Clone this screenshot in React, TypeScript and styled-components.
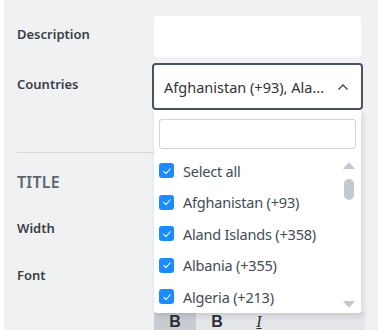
import React from "react";
import styled, { createGlobalStyle } from "styled-components";

const GlobalStyle = createGlobalStyle`
  html, body {
    margin: 0;
    padding: 0;
    background: #ffffff;
  }
  body {
    font-family: "Noto Sans", "Open Sans", Arial, sans-serif;
  }
`;

const Page = styled.div`
  display: flex;
  height: 330px;
  overflow: hidden;
`;

const Panel = styled.div`
  position: relative;
  margin-left: 4px;
  width: 374px;
  height: 330px;
  background-color: #f0f1f3;
  padding: 16px 17px 0 13px;
  box-sizing: border-box;
`;

const Row = styled.div<{ $h: number }>`
  display: grid;
  grid-template-columns: 137px 207px;
  align-items: center;
  height: ${(p) => p.$h}px;
`;

const Label = styled.div`
  font-size: 13px;
  font-weight: 600;
  color: #3a3f47;
  padding-bottom: 5px;
`;

const TextBox = styled.div`
  height: 41px;
  background: #ffffff;
  border-radius: 3px;
`;

const Select = styled.div`
  position: relative;
  margin-left: -2px;
  width: 211px;
  height: 47px;
  box-sizing: border-box;
  border: 2px solid #4a5360;
  border-radius: 4px;
  background: #ffffff;
  display: flex;
  align-items: center;
  justify-content: space-between;
  padding: 0 12px 0 10px;
  font-size: 14.5px;
  color: #333333;
`;

const Divider = styled.div`
  margin-top: 42px;
  width: 344px;
  height: 1px;
  background: #d6d9dd;
`;

const SectionTitle = styled.div`
  margin-top: 18px;
  height: 20px;
  font-size: 16px;
  font-weight: 600;
  color: #5c6570;
  letter-spacing: 0.2px;
`;

const Dropdown = styled.div`
  position: absolute;
  left: 150px;
  top: 110px;
  width: 207px;
  height: 203px;
  background: #ffffff;
  border-radius: 0 0 3px 3px;
  box-shadow: 2px 3px 6px rgba(0, 0, 0, 0.12);
  padding: 9px 5px 0 5px;
  box-sizing: border-box;
  z-index: 2;
`;

const Search = styled.div`
  height: 30px;
  box-sizing: border-box;
  border: 1px solid #cfd2d6;
  border-radius: 3px;
`;

const ListWrap = styled.div`
  display: flex;
  margin-top: 6px;
`;

const List = styled.div`
  flex: 1;
  display: flex;
  flex-direction: column;
`;

const Item = styled.div`
  display: flex;
  align-items: center;
  gap: 9px;
  height: 31.5px;
  font-size: 14.5px;
  letter-spacing: -0.2px;
  color: #444a52;
`;

const Check = styled.span`
  width: 15px;
  height: 15px;
  border-radius: 3px;
  background: #1a8cff;
  display: flex;
  align-items: center;
  justify-content: center;
`;

const Scroll = styled.div`
  width: 14px;
  display: flex;
  flex-direction: column;
  align-items: center;
  padding-top: 7px;
  height: 146px;
`;

const Thumb = styled.div`
  margin-top: 10px;
  width: 10px;
  height: 21px;
  border-radius: 5px;
  background: #c3c9d2;
`;

const Toolbar = styled.div`
  position: absolute;
  left: 150px;
  top: 312px;
  width: 211px;
  height: 18px;
  display: flex;
  background: #e4e6e9;
`;

const ToolButton = styled.div<{ $active?: boolean }>`
  width: 42px;
  display: flex;
  justify-content: center;
  padding-top: 2px;
  background: ${(p) => (p.$active ? "#c8ccd3" : "transparent")};
  font-size: 16px;
  line-height: 16px;
  font-weight: 800;
  color: #2c3138;
  font-family: "Liberation Sans", Arial, sans-serif;
`;

const Italic = styled(ToolButton)`
  font-family: "Liberation Serif", serif;
  font-weight: 400;
  font-style: italic;
  text-decoration: underline;
`;

const countries = [
  "Afghanistan (+93)",
  "Aland Islands (+358)",
  "Albania (+355)",
  "Algeria (+213)",
];

function Tick() {
  return (
    <svg width="10" height="8" viewBox="0 0 10 8">
      <path d="M1.5 4.2 L4 6.5 L8.5 1.5" stroke="#ffffff" strokeWidth="1.1" fill="none" />
    </svg>
  );
}

export default function App() {
  return (
    <Page>
      <GlobalStyle />
      <Panel>
        <Row $h={41}>
          <Label>Description</Label>
          <TextBox />
        </Row>
        <Row $h={47} style={{ marginTop: 6 }}>
          <Label>Countries</Label>
          <Select>
            <span>Afghanistan (+93), Ala...</span>
            <svg width="12" height="8" viewBox="0 0 12 8">
              <path d="M1.5 6.5 L6 2 L10.5 6.5" stroke="#444" strokeWidth="1.4" fill="none" />
            </svg>
          </Select>
        </Row>
        <Divider />
        <SectionTitle>TITLE</SectionTitle>
        <Row $h={30} style={{ marginTop: 24 }}>
          <Label>Width</Label>
          <div />
        </Row>
        <Row $h={30} style={{ marginTop: 17 }}>
          <Label>Font</Label>
          <div />
        </Row>

        <Dropdown>
          <Search />
          <ListWrap>
            <List>
              <Item>
                <Check><Tick /></Check>
                Select all
              </Item>
              {countries.map((c) => (
                <Item key={c}>
                  <Check><Tick /></Check>
                  {c}
                </Item>
              ))}
            </List>
            <Scroll>
              <svg width="12" height="7" viewBox="0 0 12 7">
                <path d="M6 0 L12 7 L0 7 Z" fill="#c3c9d2" />
              </svg>
              <Thumb />
              <div style={{ flex: 1 }} />
              <svg width="12" height="7" viewBox="0 0 12 7">
                <path d="M0 0 L12 0 L6 7 Z" fill="#c3c9d2" />
              </svg>
            </Scroll>
          </ListWrap>
        </Dropdown>

        <Toolbar>
          <ToolButton $active>B</ToolButton>
          <ToolButton>B</ToolButton>
          <Italic>I</Italic>
        </Toolbar>
      </Panel>
    </Page>
  );
}
